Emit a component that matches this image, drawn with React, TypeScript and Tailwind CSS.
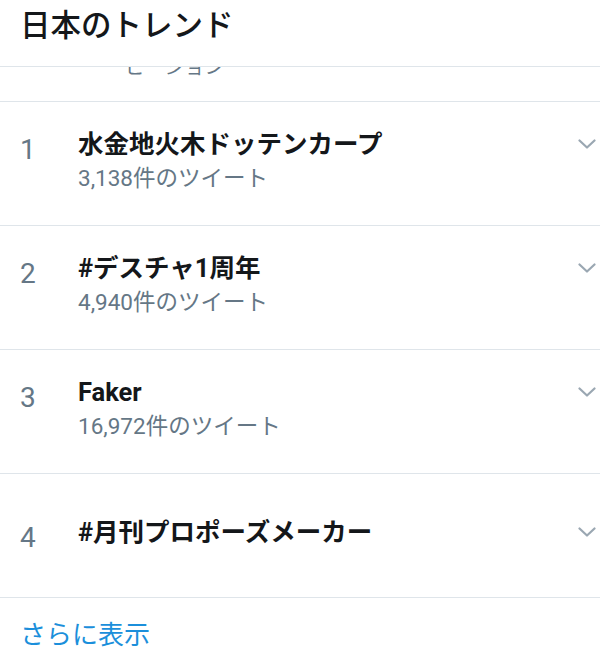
import React from "react";

const trends = [
  { n: "1", title: "水金地火木ドッテンカープ", sub: "3,138件のツイート" },
  { n: "2", title: "#デスチャ1周年", sub: "4,940件のツイート" },
  { n: "3", title: "Faker", sub: "16,972件のツイート" },
  { n: "4", title: "#月刊プロポーズメーカー", sub: "" },
];

function Chevron() {
  return (
    <svg width="18" height="11" viewBox="0 0 18 11" fill="none">
      <polyline points="1.5,1.5 9,8.5 16.5,1.5" stroke="#9aa7b2" strokeWidth="2.2" strokeLinecap="round" strokeLinejoin="round" />
    </svg>
  );
}

export default function App() {
  const font = { fontFamily: 'Roboto, "Noto Sans CJK JP", sans-serif' };
  return (
    <div className="w-[600px] h-[672px] bg-white overflow-hidden" style={font}>
      <div className="h-[67px] border-b border-[#dfe5ea] pl-5 pt-[7px]">
        <div className="text-[30.5px] leading-[38px] font-medium text-[#14171a]">日本のトレンド</div>
      </div>
      <div className="h-[35px] border-b border-[#dfe5ea] overflow-hidden pl-[125px]">
        <div className="-mt-[10px] text-[20px] leading-[20px] text-[#657786]">ビージョン</div>
      </div>
      {trends.map((t) => (
        <div
          key={t.n}
          className={`h-[124px] border-b border-[#dfe5ea] flex items-start pl-5 pr-[4px] ${t.sub ? "pt-[26px]" : "pt-[42px]"}`}
        >
          <div className="w-[58px] mt-[4px] text-[28px] leading-[36px] text-[#657786]">{t.n}</div>
          <div className="flex-1">
            <div className="text-[25.5px] leading-[32px] font-bold text-[#14171a]">{t.title}</div>
            {t.sub && (
              <div className="mt-[3px] text-[22.5px] leading-[30px] text-[#657786]">{t.sub}</div>
            )}
          </div>
          <div className="mt-[11px] w-[18px]">
            <Chevron />
          </div>
        </div>
      ))}
      <div className="pl-5 pt-[21px]">
        <div className="text-[26px] leading-[32px] text-[#1b8fdb]">さらに表示</div>
      </div>
    </div>
  );
}
